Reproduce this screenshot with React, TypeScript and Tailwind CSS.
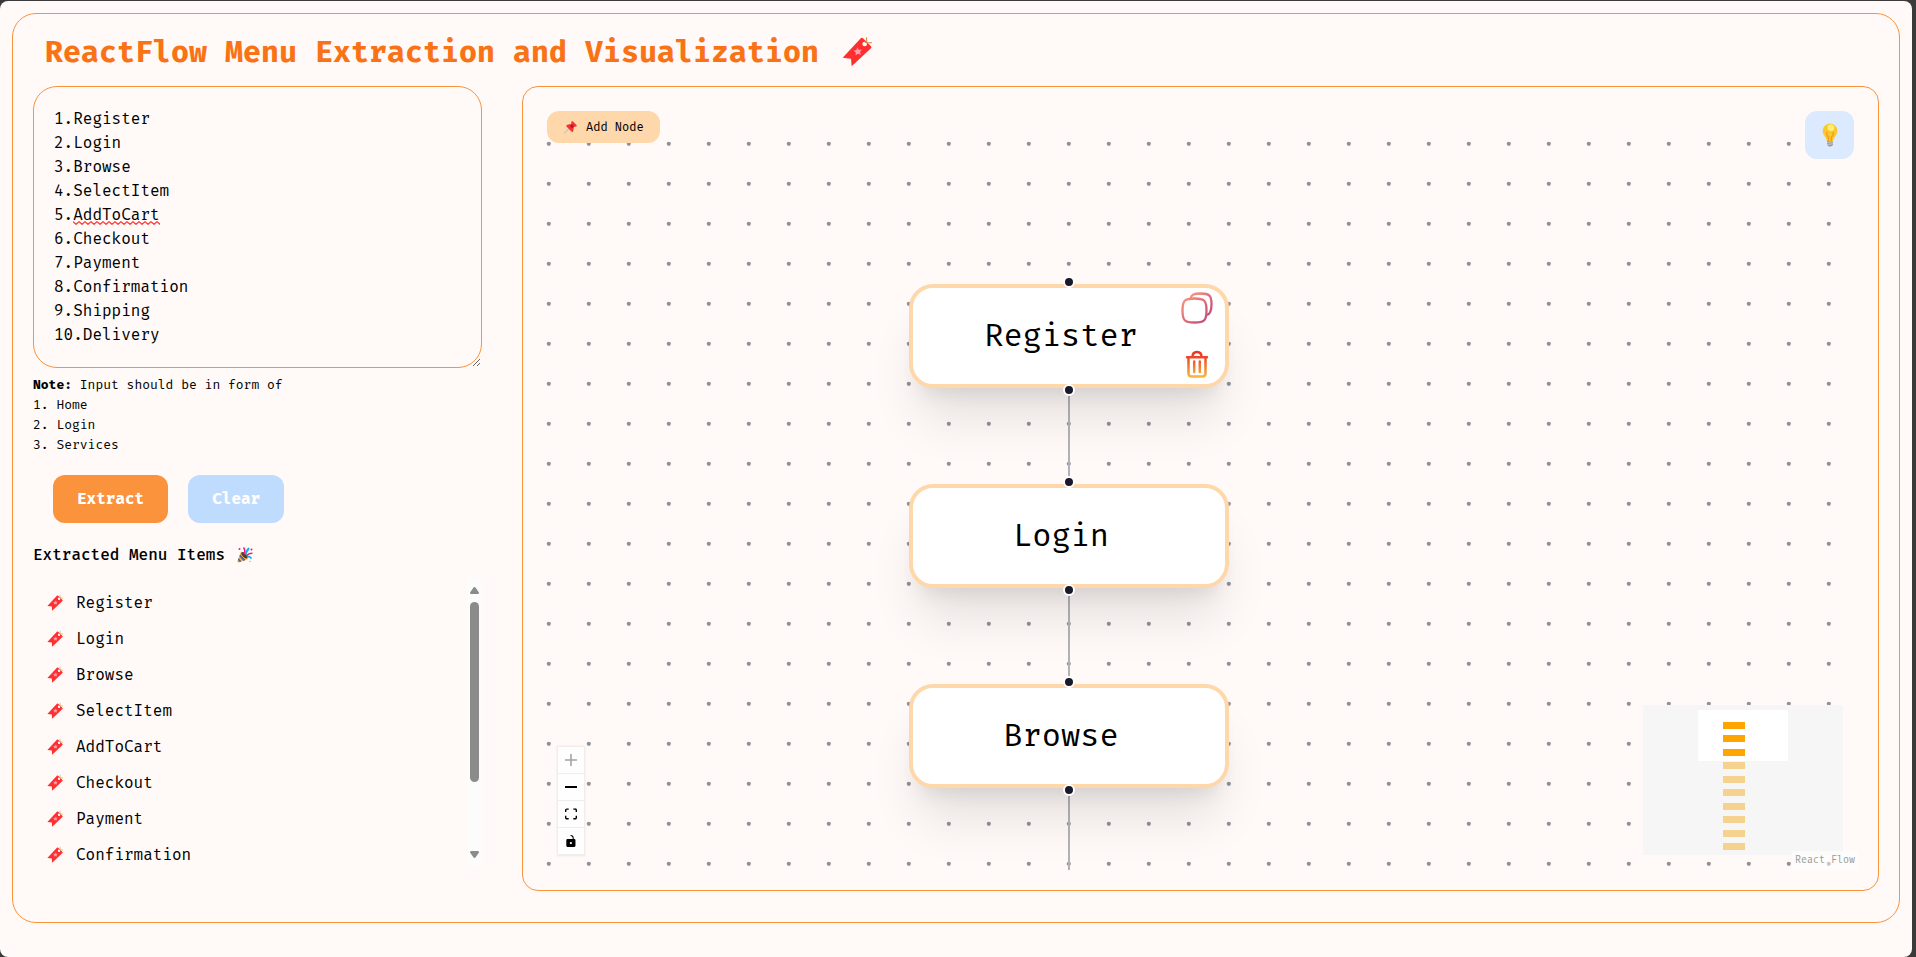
import { useState } from "react";

const MENU = [
  "Register",
  "Login",
  "Browse",
  "SelectItem",
  "AddToCart",
  "Checkout",
  "Payment",
  "Confirmation",
  "Shipping",
  "Delivery",
];

const VISIBLE_ITEMS = MENU.slice(0, 8);

const NODES = [
  { label: "Register", x: 366, y: 177, tools: true },
  { label: "Login", x: 366, y: 377, tools: false },
  { label: "Browse", x: 366, y: 577, tools: false },
];

const MINIMAP_ROWS = [17, 30, 44, 57, 71, 84, 98, 111, 125, 138];

function TagIcon({ className }: { className: string }) {
  return (
    <svg viewBox="0 0 90 90" className={className} aria-hidden="true">
      <path d="M57 3 Q60 1 63 4 L87 28 Q90 31 87 34 L29 88 L27 65 L2 62 Z" fill="#ff2f2f" />
      <circle cx="68" cy="21" r="7" fill="#fffaf8" />
      <path d="M68 15 L75 18 L73 1 M75 18 L90 17" fill="none" stroke="#c98a3c" strokeWidth="3" />
      <path
        d="M46 31 L50 38 L59 38 L54 45 L57 53 L48 50 L41 55 L41 46 L34 41 L43 39 Z"
        fill="#ff9db0"
      />
    </svg>
  );
}

function PartyIcon() {
  return (
    <svg viewBox="0 0 32 32" className="size-4" aria-hidden="true">
      <path d="M8 9 L22 24 L3 31 Q0 31 1 28 Z" fill="#f2b52e" />
      <path d="M6 15 L17 26 L13 28 L5 19 Z M3 22 L9 29 L5 30 L2 26 Z" fill="#4a5cc5" />
      <ellipse cx="15" cy="16.500" rx="4" ry="8" transform="rotate(-43 15 16.500)" fill="#5b3a2e" />
      <path d="M14 14 Q18 8 13 1" fill="none" stroke="#e8178a" strokeWidth="3" />
      <path d="M17 15 Q19 8 24 2" fill="none" stroke="#16aee8" strokeWidth="4" />
      <path d="M19 18 Q23 12 31 12" fill="none" stroke="#e8178a" strokeWidth="2.500" />
      <path d="M20 20 Q25 18 29 23" fill="none" stroke="#16aee8" strokeWidth="3.500" />
      <circle cx="5" cy="4" r="2" fill="#e8178a" />
      <circle cx="29" cy="5" r="2" fill="#e8178a" />
      <circle cx="26" cy="29" r="1.500" fill="#f2b52e" />
    </svg>
  );
}

function PinIcon() {
  return (
    <svg viewBox="0 0 32 32" className="size-4" aria-hidden="true">
      <path d="M3 28 L12 19" stroke="#c9c9c9" strokeWidth="2.500" strokeLinecap="round" />
      <path
        d="M17 5 Q18 3 20 5 L27 12 Q29 14 26 15 L21 16 Q22 21 20 25 Q19 27 17 25 L7 15 Q5 13 8 12 Q12 10 16 11 Z"
        fill="#f8312f"
      />
      <path d="M15 11 Q21 9 22 16 Q19 19 16 17 Q13 14 15 11 Z" fill="#c5123f" />
    </svg>
  );
}

function BulbIcon() {
  return (
    <svg viewBox="0 0 16 24" className="h-6 w-4" aria-hidden="true">
      <path
        d="M8 0.500 A7.400 7.400 0 0 1 15.400 8 C15.400 12 12 13.500 11.200 18 H4.800 C4 13.500 0.600 12 0.600 8 A7.400 7.400 0 0 1 8 0.500 Z"
        fill="#fcc72c"
      />
      <path d="M5 9 Q4 12 6.500 14 V18 M11 9 Q12 12 9.500 14 V18" fill="none" stroke="#f29a1f" strokeWidth="1.200" />
      <circle cx="8.800" cy="4.700" r="3.300" fill="#fff176" />
      <path d="M5 18 H11 V22 Q8 25 5 22 Z" fill="#9b9b9b" />
      <path d="M5 19.500 L11 18.700 M5 21.500 L11 20.700" stroke="#d6d6d6" strokeWidth="0.800" />
    </svg>
  );
}

function CopyIcon() {
  return (
    <svg viewBox="0 0 32 32" className="size-8" aria-hidden="true">
      <defs>
        <linearGradient id="copyStroke" x1="0" y1="0" x2="1" y2="1">
          <stop offset="0" stopColor="#f9937a" />
          <stop offset="1" stopColor="#c04a78" />
        </linearGradient>
      </defs>
      <g fill="none" stroke="url(#copyStroke)" strokeWidth="2.300">
        <path d="M1.500 18.500 C1.500 8.500 3.500 6.500 13.500 6.500 S25.500 8.500 25.500 18.500 S23.500 30.500 13.500 30.500 S1.500 28.500 1.500 18.500 Z" />
        <path d="M9.500 6.500 C10.500 2.500 13 1.500 19.500 1.500 C28.500 1.500 30.500 3.500 30.500 12 C30.500 19 29.500 22 26 23" />
      </g>
    </svg>
  );
}

function TrashIcon() {
  return (
    <svg viewBox="0 0 24 28" className="h-7 w-6" aria-hidden="true">
      <defs>
        <linearGradient id="trashStroke" gradientUnits="userSpaceOnUse" x1="0" y1="0" x2="0" y2="28">
          <stop offset="0" stopColor="#ee2a1e" />
          <stop offset="0.350" stopColor="#f0522a" />
          <stop offset="1" stopColor="#f9bd3a" />
        </linearGradient>
      </defs>
      <g fill="none" stroke="url(#trashStroke)" strokeWidth="2.500">
        <path d="M7.500 7 C7.500 3 9.500 2 12 2 S16.500 3 16.500 7" />
        <path d="M2 7.200 L22 7.300" strokeLinecap="round" />
        <path d="M3.500 8 V23.500 Q3.500 26.500 6.500 26.500 H17.500 Q20.500 26.500 20.500 23.500 V8" />
        <path d="M9.200 11.500 V22 M14.800 11.500 V22" strokeLinecap="round" />
      </g>
    </svg>
  );
}

function FlowNode({ label, x, y, tools }: { label: string; x: number; y: number; tools: boolean }) {
  return (
    <div
      className="absolute flex h-[104px] w-80 items-center justify-center rounded-3xl border-4 border-[#fed7aa] bg-white pr-4 pb-[2px] shadow-[0_40px_50px_-10px_rgba(0,0,0,0.1),0_16px_20px_-12px_rgba(0,0,0,0.1)]"
      style={{ left: x, top: y }}
    >
      <span className="text-[32px] leading-12">{label}</span>
      {tools && (
        <div className="absolute top-1 right-3 flex flex-col items-center gap-[26px]">
          <button type="button" aria-label="Duplicate node">
            <CopyIcon />
          </button>
          <button type="button" aria-label="Delete node">
            <TrashIcon />
          </button>
        </div>
      )}
      <span className="absolute -top-3 left-[150px] size-3 rounded-full border-2 border-white bg-[#1a192b]" />
      <span className="absolute -bottom-3 left-[150px] size-3 rounded-full border-2 border-white bg-[#1a192b]" />
    </div>
  );
}

function Controls() {
  const button = "flex h-[27px] w-[26px] items-center justify-center border-b border-[#eeeeee] bg-[#fefefe]";
  return (
    <div className="absolute bottom-[15px] left-[15px] flex flex-col shadow-[0_0_2px_1px_rgba(0,0,0,0.08)]">
      <button type="button" aria-label="Zoom in" className={button} disabled>
        <svg viewBox="0 0 32 32" className="size-3" fill="#a3a3a3">
          <path d="M32 18.133H18.133V32h-4.266V18.133H0v-4.266h13.867V0h4.266v13.867H32z" />
        </svg>
      </button>
      <button type="button" aria-label="Zoom out" className={button}>
        <svg viewBox="0 0 32 5" className="h-[2px] w-3" preserveAspectRatio="none">
          <path d="M0 0h32v5H0z" />
        </svg>
      </button>
      <button type="button" aria-label="Fit view" className={button}>
        <svg viewBox="0 0 32 30" className="size-3">
          <path d="M3.692 4.63c0-.53.4-.938.939-.938h5.215V0H4.708C2.130 0 0 2.054 0 4.630v5.216h3.692V4.631zM27.354 0h-5.200v3.692h5.170c.530 0 .984.400.984.939v5.215H32V4.631A4.624 4.624 0 0027.354 0zm.954 24.830c0 .532-.400.940-.939.940h-5.215v3.768h5.215c2.577 0 4.631-2.130 4.631-4.707v-5.139h-3.692v5.139zm-23.677.940c-.531 0-.939-.400-.939-.940v-5.138H0v5.139c0 2.577 2.130 4.707 4.708 4.707h5.138V25.770H4.631z" />
        </svg>
      </button>
      <button type="button" aria-label="Toggle interactivity" className={button}>
        <svg viewBox="0 0 25 32" className="size-3">
          <path d="M21.333 10.667H19.810V7.619C19.810 3.429 16.380 0 12.190 0c-4.114 1.828-1.370 2.133.305 2.438 1.676.305 4.420 2.590 4.420 5.181v3.048H3.047A3.056 3.056 0 000 13.714v15.238A3.056 3.056 0 003.048 32h18.285a3.056 3.056 0 003.048-3.048V13.714a3.056 3.056 0 00-3.048-3.047zM12.190 24.533a3.056 3.056 0 01-3.047-3.047 3.056 3.056 0 013.047-3.048 3.056 3.056 0 013.048 3.048 3.056 3.056 0 01-3.048 3.047z" />
        </svg>
      </button>
    </div>
  );
}

function MiniMap() {
  return (
    <svg
      viewBox="0 0 200 150"
      className="absolute right-[15px] bottom-[15px] h-[150px] w-[200px]"
      role="img"
      aria-label="Mini map"
      shapeRendering="crispEdges"
    >
      <rect width="200" height="150" fill="#f6f6f6" />
      <rect x="55" y="5" width="90" height="51" fill="#ffffff" />
      {MINIMAP_ROWS.map((y, i) => (
        <rect key={y} x="80" y={y} width="22" height="7" fill={i < 3 ? "#ffa500" : "#f6d28f"} />
      ))}
    </svg>
  );
}

function FlowCanvas() {
  return (
    <div className="relative h-[763px] overflow-hidden">
      <svg className="absolute inset-0 h-full w-full" aria-hidden="true">
        <defs>
          <pattern id="dots" width="40" height="40" patternUnits="userSpaceOnUse" x="-14" y="17">
            <circle cx="19.800" cy="19.800" r="2.100" fill="#91919a" />
          </pattern>
        </defs>
        <rect width="100%" height="100%" fill="url(#dots)" />
        <path d="M526 287 V371 M526 487 V571 M526 687 V763" stroke="#b1b1b7" strokeWidth="2" />
      </svg>
      {NODES.map((node) => (
        <FlowNode key={node.label} {...node} />
      ))}
      <button
        type="button"
        className="absolute top-1 left-1 flex h-8 items-center gap-[7px] rounded-xl bg-[#fed7aa] px-4 text-xs"
      >
        <PinIcon />
        Add Node
      </button>
      <button
        type="button"
        aria-label="Toggle theme"
        className="absolute top-1 right-1 flex h-12 w-[49px] items-center justify-center rounded-xl bg-[#dbeafe]"
      >
        <BulbIcon />
      </button>
      <Controls />
      <MiniMap />
      <a
        href="https://reactflow.dev"
        className="absolute right-0 bottom-0 bg-white/50 px-[3px] py-[2px] text-[10px] leading-[15px] text-[#999999]"
      >
        React Flow
      </a>
    </div>
  );
}

function ScrollRail() {
  return (
    <div className="flex w-[15px] flex-col items-center bg-[#fcfcfc] pt-[9px] pb-2" aria-hidden="true">
      <svg viewBox="0 0 9 7" className="h-[7px] w-[9px]">
        <path d="M4.500 0 Q5.200 0 5.800 1 L9 5.500 Q9 7 8 7 H1 Q0 7 0 5.500 L3.200 1 Q3.800 0 4.500 0 Z" fill="#8b8b8b" />
      </svg>
      <div className="mt-2 h-[180px] w-[9px] rounded-full bg-[#8b8b8b]" />
      <svg viewBox="0 0 9 7" className="mt-auto h-[7px] w-[9px]">
        <path d="M4.500 7 Q5.200 7 5.800 6 L9 1.500 Q9 0 8 0 H1 Q0 0 0 1.500 L3.200 6 Q3.800 7 4.500 7 Z" fill="#8b8b8b" />
      </svg>
    </div>
  );
}

function Sidebar() {
  const [text, setText] = useState(MENU.map((name, i) => `${i + 1}.${name}`).join("\n"));
  return (
    <section className="flex flex-col">
      <div className="relative">
        <textarea
          aria-label="Menu input"
          rows={10}
          spellCheck={false}
          value={text}
          onChange={(event) => setText(event.target.value)}
          className="block w-full rounded-3xl border border-[#fb923c] bg-transparent p-5 text-base leading-6 outline-none"
        />
        <svg className="pointer-events-none absolute top-[135px] left-10 h-1 w-[87px]" aria-hidden="true">
          <defs>
            <pattern id="squiggle" width="6" height="4" patternUnits="userSpaceOnUse">
              <path d="M-1 0 L0 0.700 L3 3.300 L6 0.700 L7 0" fill="none" stroke="#ff3b3b" strokeWidth="1.300" />
            </pattern>
          </defs>
          <rect width="100%" height="100%" fill="url(#squiggle)" />
        </svg>
      </div>
      <div className="mt-[7px] text-[13px] leading-5">
        <p>
          <strong>Note:</strong> Input should be in form of
        </p>
        <p>1. Home</p>
        <p>2. Login</p>
        <p>3. Services</p>
      </div>
      <div className="m-5 flex gap-5">
        <button type="button" className="rounded-xl bg-[#fb923c] px-6 py-3 font-bold text-white">
          Extract
        </button>
        <button type="button" className="rounded-xl bg-[#bfdbfe] px-6 py-3 font-bold text-white">
          Clear
        </button>
      </div>
      <h2 className="flex items-center gap-3 text-base font-medium">
        Extracted Menu Items <PartyIcon />
      </h2>
      <div className="mt-[11px] flex h-72 justify-between overflow-hidden">
        <ul className="px-[14px] pt-[7px]">
          {VISIBLE_ITEMS.map((item) => (
            <li key={item} className="flex h-9 items-center gap-[13px]">
              <TagIcon className="size-4" />
              {item}
            </li>
          ))}
        </ul>
        <ScrollRail />
      </div>
    </section>
  );
}

export default function App() {
  return (
    <div className="flex min-h-screen bg-[#3b3a3b] pt-px pr-1 font-['Fira_Mono','Fira_Code','DejaVu_Sans_Mono',monospace] text-black">
      <div className="flex-1 rounded-lg bg-[#fffaf8] p-3">
        <main className="rounded-3xl border border-[#fb923c] px-5 pt-5 pb-[31px]">
          <h1 className="mb-4 flex items-center gap-[23px] px-3 text-3xl leading-9 font-bold text-[#f97316]">
            ReactFlow Menu Extraction and Visualization
            <TagIcon className="size-[30px]" />
          </h1>
          <div className="grid grid-cols-[449px_minmax(0,1fr)] gap-10">
            <Sidebar />
            <section className="self-start rounded-2xl border border-[#fb923c] p-5">
              <FlowCanvas />
            </section>
          </div>
        </main>
      </div>
    </div>
  );
}
